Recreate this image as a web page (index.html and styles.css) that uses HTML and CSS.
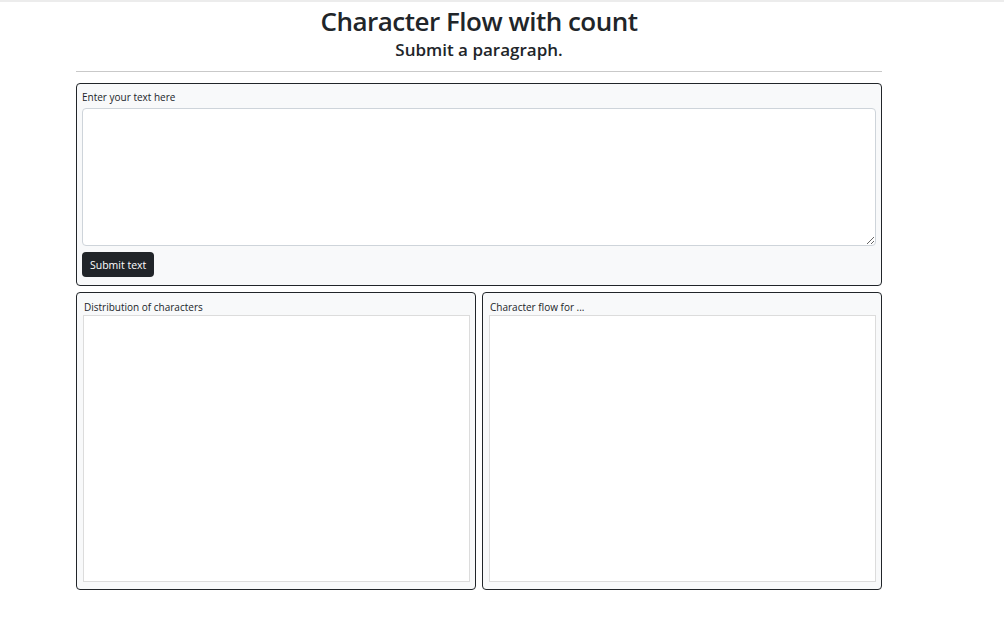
FILE: index.html
```html
<!DOCTYPE html>
<html>
<head>
<meta charset="utf-8">
<link rel="stylesheet" href="styles.css">
</head>
<body>
<div class="topline"></div>
<main class="page">
  <header class="head">
    <h1 class="title">Character Flow with count</h1>
    <h2 class="subtitle">Submit a paragraph.</h2>
  </header>
  <hr class="rule">
  <section class="card card-input">
    <label class="label" for="txt">Enter your text here</label>
    <textarea id="txt" class="textarea"></textarea>
    <div class="actions"><button class="btn">Submit text</button></div>
  </section>
  <div class="row">
    <section class="card card-chart">
      <div class="label label-chart">Distribution of characters</div>
      <div class="chart-box"></div>
    </section>
    <section class="card card-chart">
      <div class="label label-chart">Character flow for ...</div>
      <div class="chart-box"></div>
    </section>
  </div>
</main>
</body>
</html>
```

FILE: styles.css
```css
* { box-sizing: border-box; }
html, body { margin: 0; padding: 0; background: #fff; }
body {
  font-family: "Open Sans", "Noto Sans", sans-serif;
  color: #212529;
}
.topline { height: 2px; background: #ececec; }
.page {
  width: 806px;
  margin-left: 76px;
}
.head { text-align: center; }
.title {
  margin: 2px 0 0;
  font-size: 26px;
  font-weight: 600;
  line-height: 34px;
  letter-spacing: -0.5px;
}
.subtitle {
  margin: 0;
  font-size: 17px;
  font-weight: 600;
  line-height: 24px;
}
.rule {
  margin: 9px 0 11px;
  border: 0;
  border-top: 1px solid #c9c9c9;
  height: 0;
}
.card {
  background: #f8f9fa;
  border: 1px solid #212529;
  border-radius: 4px;
}
.card-input {
  padding: 6px 5px 8px;
  display: flex;
  flex-direction: column;
}
.label {
  font-size: 10px;
  line-height: 14px;
  color: #212529;
  display: block;
  margin-bottom: 4px;
}
.textarea {
  display: block;
  width: 100%;
  height: 138px;
  border: 1px solid #ced4da;
  border-radius: 4px;
  background: #fff;
  resize: vertical;
  margin: 0 0 6px;
}
.actions { display: flex; }
.btn {
  background: #212529;
  color: #fff;
  border: 0;
  border-radius: 4px;
  font-family: inherit;
  font-size: 10.5px;
  height: 25px;
  padding: 0 8px;
}
.row {
  display: grid;
  grid-template-columns: 400px 400px;
  gap: 6px;
  margin-top: 6px;
}
.card-chart {
  height: 298px;
  padding: 7px 5px 7px 6px;
  display: flex;
  flex-direction: column;
}
.label-chart { margin: 0 0 1px 1px; }
.chart-box {
  flex: 1;
  background: #fff;
  border: 1px solid #dcdcdc;
}
```
